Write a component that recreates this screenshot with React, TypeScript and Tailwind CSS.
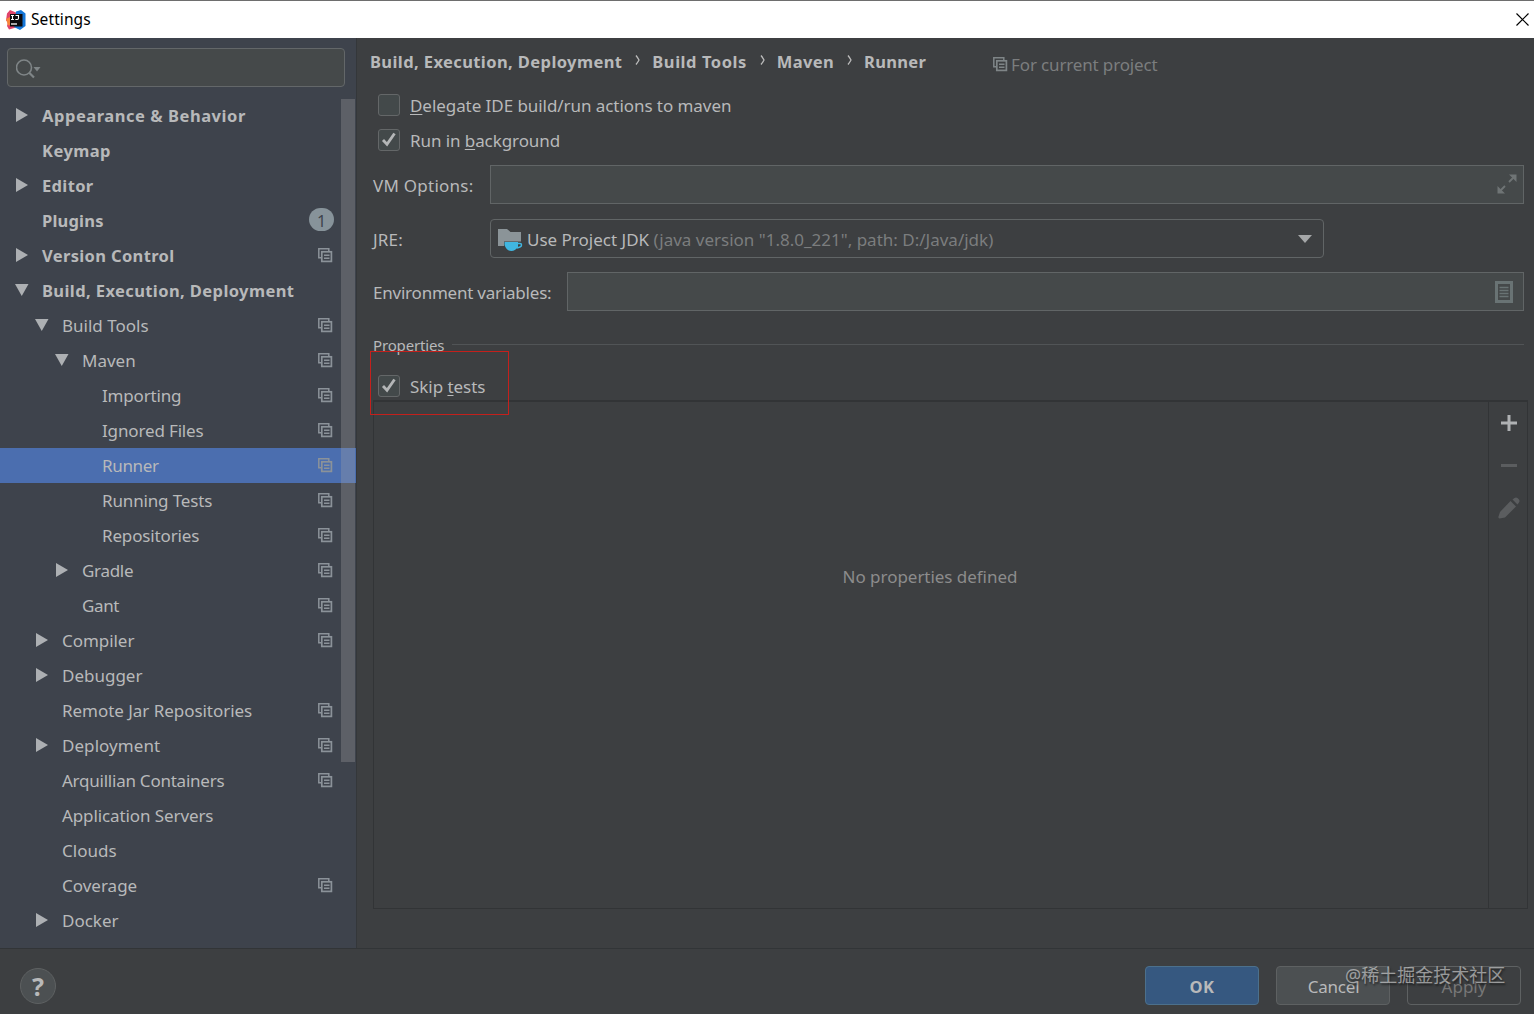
import { useState } from "react";
import clsx from "clsx";

interface TreeItem {
  label: string;
  level: number;
  arrow?: "open" | "closed";
  project?: boolean;
  badge?: number;
  tracking?: string;
}

const TREE: TreeItem[] = [
  { label: "Appearance & Behavior", level: 0, arrow: "closed", tracking: "tracking-[0.54px]" },
  { label: "Keymap", level: 0, tracking: "tracking-[0.45px]" },
  { label: "Editor", level: 0, arrow: "closed", tracking: "tracking-[0.35px]" },
  { label: "Plugins", level: 0, badge: 1, tracking: "tracking-[0.2px]" },
  { label: "Version Control", level: 0, arrow: "closed", project: true, tracking: "tracking-[0.35px]" },
  { label: "Build, Execution, Deployment", level: 0, arrow: "open", tracking: "tracking-[0.4px]" },
  { label: "Build Tools", level: 1, arrow: "open", project: true },
  { label: "Maven", level: 2, arrow: "open", project: true },
  { label: "Importing", level: 3, project: true, tracking: "tracking-[-0.18px]" },
  { label: "Ignored Files", level: 3, project: true, tracking: "tracking-[-0.15px]" },
  { label: "Runner", level: 3, project: true, tracking: "tracking-[-0.35px]" },
  { label: "Running Tests", level: 3, project: true, tracking: "tracking-[-0.15px]" },
  { label: "Repositories", level: 3, project: true, tracking: "tracking-[-0.15px]" },
  { label: "Gradle", level: 2, arrow: "closed", project: true, tracking: "tracking-[-0.3px]" },
  { label: "Gant", level: 2, project: true, tracking: "tracking-[-0.35px]" },
  { label: "Compiler", level: 1, arrow: "closed", project: true, tracking: "tracking-[-0.05px]" },
  { label: "Debugger", level: 1, arrow: "closed" },
  { label: "Remote Jar Repositories", level: 1, project: true, tracking: "tracking-[-0.04px]" },
  { label: "Deployment", level: 1, arrow: "closed", project: true, tracking: "tracking-[0.06px]" },
  { label: "Arquillian Containers", level: 1, project: true, tracking: "tracking-[-0.24px]" },
  { label: "Application Servers", level: 1, tracking: "tracking-[-0.1px]" },
  { label: "Clouds", level: 1 },
  { label: "Coverage", level: 1, project: true },
  { label: "Docker", level: 1, arrow: "closed" },
];

const INDENT = ["pl-[14px]", "pl-[34px]", "pl-[54px]", "pl-[74px]"];

function ProjectIcon({ className }: { className?: string }) {
  return (
    <svg width="15" height="15" viewBox="0 0 15 15" fill="none" stroke="currentColor" className={clsx("shrink-0", className)}>
      <path d="M3 9.8H.8V.8h10V3" strokeWidth="1.5" />
      <rect x="3.8" y="3.8" width="9.6" height="9.6" strokeWidth="1.7" />
      <path d="M6 7.3h5.500M6 10.300h5.500" strokeWidth="1.5" />
    </svg>
  );
}

function TreeArrow({ state }: { state?: "open" | "closed" }) {
  return (
    <svg width="16" height="16" viewBox="0 0 16 16" fill="#adb0b3" className="-mt-0.5 mr-3 shrink-0">
      {state === "closed" && <path d="M2 1v14l12-7z" />}
      {state === "open" && <path d="M1 2h13.500L7.750 14z" />}
    </svg>
  );
}

function Checkbox({ checked, onChange }: { checked: boolean; onChange: () => void }) {
  return (
    <button
      onClick={onChange}
      className="flex size-[22px] shrink-0 items-center justify-center rounded-[3px] border-[1.5px] border-[#646768] bg-[#43494a]"
    >
      {checked && (
        <svg width="18" height="18" viewBox="0 0 18 18" fill="none" stroke="#b4b6b7" strokeWidth="2.8">
          <path d="M3 9l4 4.200L14.500 2.500" />
        </svg>
      )}
    </button>
  );
}

function AppLogo() {
  return (
    <svg width="20" height="20" viewBox="0 0 20 20">
      <path d="M1 3.500L4 0l6 2.500v15L3 19.500 1 16l1-4-2-1.500z" fill="#e0436a" />
      <path d="M0 9l4-2 1 8-3 .5z" fill="#f7863a" />
      <path d="M10 1.500L15 0l4.500 3.500L19.500 16 14 20l-6-3z" fill="#1677d8" />
      <rect x="4" y="4" width="12.500" height="12.500" fill="#0c0a0d" />
      <path d="M5 5.500h3M6.500 5.500v4M5 9.500h3M9.500 5.500h3v2.800q0 1.200-1.200 1.200h-2" stroke="#fff" strokeWidth="1.1" fill="none" />
      <path d="M5 14h6" stroke="#fff" strokeWidth="1.3" />
    </svg>
  );
}

function Chevron() {
  return (
    <span className="flex w-[30px] justify-center pl-px">
      <svg width="5" height="10" viewBox="0 0 5 10" fill="none" stroke="#bbb" strokeWidth="1.3" className="mb-1">
        <path d="M1 .5Q3 3 4 5 3 7 1 9.500" />
      </svg>
    </span>
  );
}

export default function App() {
  const [selected, setSelected] = useState("Runner");
  const [delegate, setDelegate] = useState(false);
  const [background, setBackground] = useState(true);
  const [skipTests, setSkipTests] = useState(true);

  return (
    <div className="relative flex h-[1014px] w-[1534px] flex-col overflow-hidden bg-[#3d3f41] font-['Noto_Sans','Noto_Sans_CJK_SC',sans-serif] text-[17px] leading-6 text-[#b8b9ba]">
      <header className="flex h-[38px] shrink-0 items-center border-t border-[#6e6e6e] bg-white pr-[5px] pl-[6px] text-black">
        <AppLogo />
        <span className="-mt-0.5 ml-[5px] text-[15.5px] tracking-[0.1px]">Settings</span>
        <svg width="13" height="13" viewBox="0 0 13 13" stroke="#000" strokeWidth="1.2" className="ml-auto">
          <path d="M.5.5l12 12M12.500.5l-12 12" />
        </svg>
      </header>

      <div className="flex h-[911px] shrink-0 border-b border-[#323537]">
        <aside className="flex w-[357px] shrink-0 flex-col border-r border-[#34373a] bg-[#3e434c]">
          <div className="h-[60px] shrink-0 pt-[10px] pl-[7px]">
            <div className="flex h-[39px] w-[338px] items-center rounded-[4px] border-[1.5px] border-[#636769] bg-[#45494a] pl-2">
              <svg width="26" height="20" viewBox="0 0 26 20" fill="none" stroke="#7f8587" className="mt-0.5">
                <circle cx="8" cy="8.500" r="7.500" strokeWidth="1.6" />
                <path d="M13 13.500l5 5" strokeWidth="2.2" />
                <path d="M17.500 8h7L21 12.500z" fill="#7f8587" stroke="none" />
              </svg>
            </div>
          </div>
          <div className="relative flex-1">
            {TREE.map((item) => (
              <div
                key={item.label}
                onClick={() => setSelected(item.label)}
                className={clsx(
                  "flex h-[35px] items-center pr-[23px]",
                  INDENT[item.level],
                  item.level === 0 && "text-[16.5px] font-bold",
                  selected === item.label && "bg-[#4b6eaf]"
                )}
              >
                <TreeArrow state={item.arrow} />
                <span className={clsx("whitespace-nowrap", item.tracking)}>{item.label}</span>
                {item.project && <ProjectIcon className="ml-auto text-[#8b9299]" />}
                {item.badge && (
                  <span className="-mt-0.5 -mr-px ml-auto flex h-[23px] w-[25px] items-center justify-center rounded-full bg-[#87939a] pt-0.5 text-base font-normal text-[#3e434c]">
                    {item.badge}
                  </span>
                )}
              </div>
            ))}
            <div className="absolute top-px right-px h-[663px] w-[14px] bg-[#a6a6a6]/30" />
          </div>
        </aside>

        <main className="flex flex-1 flex-col pl-[16px]">
          <div className="-ml-[3px] flex h-[48px] shrink-0 items-center text-[16.5px] font-bold">
            <span className="tracking-[0.4px]">Build, Execution, Deployment</span>
            <Chevron />
            <span className="tracking-[0.55px]">Build Tools</span>
            <Chevron />
            <span className="tracking-[0.35px]">Maven</span>
            <Chevron />
            <span className="tracking-[0.3px]">Runner</span>
            <ProjectIcon className="mt-1 ml-[67px] text-[#7f8587]" />
            <span className="mt-1.5 ml-[3px] text-[17px] font-normal tracking-[-0.15px] text-[#7b7d7e]">For current project</span>
          </div>

          <label className="mt-px flex h-[35px] shrink-0 items-center gap-[10px] pl-[5px]">
            <Checkbox checked={delegate} onChange={() => setDelegate(!delegate)} />
            <span className="pt-0.5 tracking-[-0.06px]"><u className="underline-offset-2">D</u>elegate IDE build/run actions to maven</span>
          </label>
          <label className="flex h-[35px] shrink-0 items-center gap-[10px] pl-[5px]">
            <Checkbox checked={background} onChange={() => setBackground(!background)} />
            <span className="pt-0.5 tracking-[-0.08px]">Run in <u className="underline-offset-2">b</u>ackground</span>
          </label>

          <div className="mt-2 flex h-[39px] shrink-0 items-center pr-[10px]">
            <span className="w-[117px] pt-0.5 tracking-[0.25px]">VM Options:</span>
            <div className="flex h-full flex-1 items-center justify-end border-[1.5px] border-[#616566] bg-[#45494a] pr-[6px] pb-0.5">
              <svg width="20" height="20" viewBox="0 0 20 20" stroke="#6f7475" strokeWidth="1.8" fill="#6f7475">
                <path d="M12 8l5-5M8 12l-5 5" />
                <path d="M12 .5h7.500V8zM.5 12v7.500H8z" stroke="none" />
              </svg>
            </div>
          </div>

          <div className="mt-[15px] flex h-[39px] shrink-0 items-center">
            <span className="w-[117px] pt-[3px] tracking-[0.2px]">JRE:</span>
            <div className="flex h-full w-[834px] items-center rounded-[4px] border-[1.5px] border-[#616566] pr-[11px] pl-[7px]">
              <svg width="25" height="22" viewBox="0 0 25 22" className="mt-[3px]">
                <path d="M0 0h9l3.500 3H23v9.500H6V17H0z" fill="#8b9498" />
                <path d="M6.500 13H20v5q-3 4-6.500 4-5 0-7-6z" fill="#40b6e0" />
                <path d="M19 14.500h3q1.500 0 1.500 1.500t-1.500 2l-3 1" fill="none" stroke="#40b6e0" strokeWidth="1.5" />
              </svg>
              <span className="ml-[4px] pt-[3px]">
                Use Project JDK <span className="text-[#7b7d7e]">(java version "1.8.0_221", path: D:/Java/jdk)</span>
              </span>
              <svg width="14" height="8" viewBox="0 0 14 8" fill="#a5a7a8" className="ml-auto">
                <path d="M0 0h14L7 8z" />
              </svg>
            </div>
          </div>

          <div className="mt-[14px] flex h-[39px] shrink-0 items-center pr-[10px]">
            <span className="w-[194px] pt-[3px] tracking-[-0.22px]">Environment variables:</span>
            <div className="flex h-full flex-1 items-center justify-end border-[1.5px] border-[#616566] bg-[#45494a] pr-[10px]">
              <svg width="18" height="22" viewBox="0 0 18 22" fill="none" stroke="#697374">
                <rect x="1.500" y="1.500" width="15" height="19" strokeWidth="3" />
                <path d="M4.500 6.500h9M4.500 9.500h9M4.500 12.500h9M4.500 15.500h9" strokeWidth="1.3" />
              </svg>
            </div>
          </div>

          <div className="mt-[22px] flex h-6 shrink-0 items-center gap-2 pr-[10px] text-[15px]">
            <span className="tracking-[-0.15px]">Properties</span>
            <div className="mb-0.5 h-px flex-1 bg-[#515456]" />
          </div>
          <label className="mt-[11px] flex h-[35px] shrink-0 items-center gap-[10px] pl-[5px]">
            <Checkbox checked={skipTests} onChange={() => setSkipTests(!skipTests)} />
            <span className="pt-0.5 tracking-[-0.05px]">Skip <u className="underline-offset-2">t</u>ests</span>
          </label>

          <div className="-mt-[3px] mr-[6px] flex h-[509px] shrink-0 border border-t-2 border-[#323436]">
            <div className="flex-1 border-r border-[#323436] pt-[163px] pr-0.5 text-center tracking-[-0.04px] text-[#8c8c8c]">
              No properties defined
            </div>
            <div className="flex w-[38px] flex-col items-center pt-[13px] pl-px">
              <svg width="16" height="16" viewBox="0 0 16 16" stroke="#afb1b3" strokeWidth="3">
                <path d="M8 0v16M0 8h16" />
              </svg>
              <svg width="16" height="3" viewBox="0 0 16 3" fill="#5b5d5f" className="mt-[33px]">
                <path d="M0 0h16v3H0z" />
              </svg>
              <svg width="22" height="22" viewBox="0 0 22 22" fill="#5b5d5f" className="mt-[30px]">
                <path d="M12.500 4l5.500 5.500L7 20.500l-5.500 1Q0 21 .5 19.500L2 15zM14.500 2.500l2-1.500q1.500-1 3 0l1.500 1.500q1 1.500 0 3l-1.500 2z" />
              </svg>
            </div>
          </div>
        </main>
      </div>

      <footer className="flex flex-1 items-center justify-end gap-[17px] pt-2 pr-[13px]">
        <button className="mr-auto ml-[20px] flex size-9 items-center justify-center rounded-full border border-[#5e6162] bg-[#4c5052] text-[25px] font-bold">
          ?
        </button>
        <button className="h-[39px] w-[114px] rounded-[4px] border-[1.5px] border-[#4c708c] bg-[#365880] pt-0.5 text-[16.5px] font-bold tracking-[0.5px]">OK</button>
        <button className="h-[39px] w-[114px] rounded-[4px] border-[1.5px] border-[#5e6162] bg-[#4c5052] pt-0.5 pl-px tracking-[-0.2px]">Cancel</button>
        <button className="h-[39px] w-[114px] rounded-[4px] border-[1.5px] border-[#5e6162] pt-0.5 text-[#777]">Apply</button>
      </footer>

      {/* highlight around the skip tests option */}
      <div className="pointer-events-none absolute top-[351px] left-[370px] h-[64px] w-[139px] border border-[#c4201c]" />
      <div className="pointer-events-none absolute top-[963px] left-[1345px] text-[18px] whitespace-nowrap text-white/50 [text-shadow:1px_2px_2px_rgba(0,0,0,0.5)]">
        @稀土掘金技术社区
      </div>
    </div>
  );
}
